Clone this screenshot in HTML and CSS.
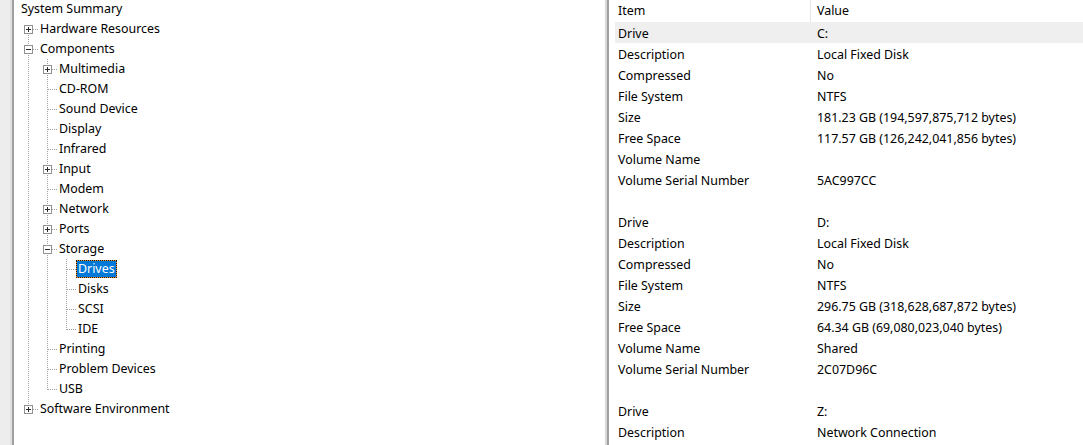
FILE: index.html
```html
<!DOCTYPE html>
<html lang="en">
<head>
    <meta charset="UTF-8">
    <meta name="viewport" content="width=device-width, initial-scale=1.0">
    <title>System Information</title>
    <link rel="stylesheet" href="styles.css">
</head>
<body>
    <div class="window">
        <div class="edge"></div>

        <div class="tree-pane">
            <div class="tree">
                <div class="node"><span class="label">System Summary</span></div>
                <div class="node"><span class="cell first"><span class="box plus"></span></span><span class="label">Hardware Resources</span></div>
                <div class="node"><span class="cell tee"><span class="box minus"></span></span><span class="label">Components</span></div>

                <div class="node"><span class="cell pipe"></span><span class="cell tee"><span class="box plus"></span></span><span class="label">Multimedia</span></div>
                <div class="node"><span class="cell pipe"></span><span class="cell tee"></span><span class="label">CD-ROM</span></div>
                <div class="node"><span class="cell pipe"></span><span class="cell tee"></span><span class="label">Sound Device</span></div>
                <div class="node"><span class="cell pipe"></span><span class="cell tee"></span><span class="label">Display</span></div>
                <div class="node"><span class="cell pipe"></span><span class="cell tee"></span><span class="label">Infrared</span></div>
                <div class="node"><span class="cell pipe"></span><span class="cell tee"><span class="box plus"></span></span><span class="label">Input</span></div>
                <div class="node"><span class="cell pipe"></span><span class="cell tee"></span><span class="label">Modem</span></div>
                <div class="node"><span class="cell pipe"></span><span class="cell tee"><span class="box plus"></span></span><span class="label">Network</span></div>
                <div class="node"><span class="cell pipe"></span><span class="cell tee"><span class="box plus"></span></span><span class="label">Ports</span></div>
                <div class="node"><span class="cell pipe"></span><span class="cell tee"><span class="box minus"></span></span><span class="label">Storage</span></div>

                <div class="node"><span class="cell pipe"></span><span class="cell pipe"></span><span class="cell tee"></span><span class="label selected"><span>Drives</span></span></div>
                <div class="node"><span class="cell pipe"></span><span class="cell pipe"></span><span class="cell tee"></span><span class="label">Disks</span></div>
                <div class="node"><span class="cell pipe"></span><span class="cell pipe"></span><span class="cell tee"></span><span class="label">SCSI</span></div>
                <div class="node"><span class="cell pipe"></span><span class="cell pipe"></span><span class="cell elbow"></span><span class="label">IDE</span></div>

                <div class="node"><span class="cell pipe"></span><span class="cell tee"></span><span class="label">Printing</span></div>
                <div class="node"><span class="cell pipe"></span><span class="cell tee"></span><span class="label">Problem Devices</span></div>
                <div class="node"><span class="cell pipe"></span><span class="cell elbow"></span><span class="label">USB</span></div>

                <div class="node"><span class="cell elbow"><span class="box plus"></span></span><span class="label">Software Environment</span></div>
            </div>
        </div>

        <div class="splitter"></div>

        <div class="list-pane">
            <div class="row header">
                <div class="col-item">Item</div>
                <div class="col-value">Value</div>
            </div>

            <div class="row hot"><div class="col-item">Drive</div><div class="col-value">C:</div></div>
            <div class="row"><div class="col-item">Description</div><div class="col-value">Local Fixed Disk</div></div>
            <div class="row"><div class="col-item">Compressed</div><div class="col-value">No</div></div>
            <div class="row"><div class="col-item">File System</div><div class="col-value">NTFS</div></div>
            <div class="row"><div class="col-item">Size</div><div class="col-value">181.23 GB (194,597,875,712 bytes)</div></div>
            <div class="row"><div class="col-item">Free Space</div><div class="col-value">117.57 GB (126,242,041,856 bytes)</div></div>
            <div class="row"><div class="col-item">Volume Name</div><div class="col-value"></div></div>
            <div class="row"><div class="col-item">Volume Serial Number</div><div class="col-value">5AC997CC</div></div>
            <div class="row"><div class="col-item"></div><div class="col-value"></div></div>

            <div class="row"><div class="col-item">Drive</div><div class="col-value">D:</div></div>
            <div class="row"><div class="col-item">Description</div><div class="col-value">Local Fixed Disk</div></div>
            <div class="row"><div class="col-item">Compressed</div><div class="col-value">No</div></div>
            <div class="row"><div class="col-item">File System</div><div class="col-value">NTFS</div></div>
            <div class="row"><div class="col-item">Size</div><div class="col-value">296.75 GB (318,628,687,872 bytes)</div></div>
            <div class="row"><div class="col-item">Free Space</div><div class="col-value">64.34 GB (69,080,023,040 bytes)</div></div>
            <div class="row"><div class="col-item">Volume Name</div><div class="col-value">Shared</div></div>
            <div class="row"><div class="col-item">Volume Serial Number</div><div class="col-value">2C07D96C</div></div>
            <div class="row"><div class="col-item"></div><div class="col-value"></div></div>

            <div class="row"><div class="col-item">Drive</div><div class="col-value">Z:</div></div>
            <div class="row"><div class="col-item">Description</div><div class="col-value">Network Connection</div></div>
        </div>
    </div>
</body>
</html>
```

FILE: styles.css
```css
body {
    margin: 0;
    padding: 0;
    font-family: "Noto Sans", "Open Sans", sans-serif;
    font-size: 12.4px;
    color: #000;
    background-color: #fff;
}

.window {
    display: flex;
    height: 445px;
    overflow: hidden;
}

/* strip of the window frame on the left */
.edge {
    flex: 0 0 10px;
    background-color: #ededed;
    border-right: 2px solid #e0e0e0;
}

.tree-pane {
    flex: 0 0 593px;
    border-left: 2px solid #a0a0a0;
    box-sizing: border-box;
    padding-left: 5px;
    background-color: #fff;
    overflow: hidden;
}

.tree {
    margin-top: -1px;
}

.node {
    display: flex;
    align-items: center;
    height: 20px;
    white-space: nowrap;
}

/* one indent column of the tree, lines drawn as 1px dots */
.cell {
    flex: 0 0 19px;
    height: 20px;
    display: flex;
    align-items: center;
}

.pipe {
    background: repeating-linear-gradient(to bottom, #a0a0a0 0 1px, transparent 1px 2px) 9px 0 / 1px 20px no-repeat;
}

.tee {
    background:
        repeating-linear-gradient(to right, #a0a0a0 0 1px, transparent 1px 2px) 10px 10px / 9px 1px no-repeat,
        repeating-linear-gradient(to bottom, #a0a0a0 0 1px, transparent 1px 2px) 9px 0 / 1px 20px no-repeat;
}

.elbow {
    background:
        repeating-linear-gradient(to right, #a0a0a0 0 1px, transparent 1px 2px) 10px 10px / 9px 1px no-repeat,
        repeating-linear-gradient(to bottom, #a0a0a0 0 1px, transparent 1px 2px) 9px 0 / 1px 11px no-repeat;
}

.first {
    background:
        repeating-linear-gradient(to right, #a0a0a0 0 1px, transparent 1px 2px) 10px 10px / 9px 1px no-repeat,
        repeating-linear-gradient(to bottom, #a0a0a0 0 1px, transparent 1px 2px) 9px 10px / 1px 10px no-repeat;
}

/* expand / collapse box */
.box {
    width: 9px;
    height: 9px;
    margin-left: 5px;
    margin-top: 1px;
    box-sizing: border-box;
    border: 1px solid #919191;
    background-color: #fff;
}

.minus {
    background: linear-gradient(#2a2a2a, #2a2a2a) 1px 3px / 5px 1px no-repeat, #fff;
}

.plus {
    background:
        linear-gradient(#2a2a2a, #2a2a2a) 1px 3px / 5px 1px no-repeat,
        linear-gradient(#2a2a2a, #2a2a2a) 3px 1px / 1px 5px no-repeat,
        #fff;
}

.label {
    padding: 0 2px;
    line-height: 18px;
}

/* focus rectangle around the selected item */
.label.selected {
    padding: 0;
    line-height: 16px;
    border: 1px dotted #1a1a1a;
    background-color: #f0912e;
}

.label.selected span {
    display: block;
    padding: 0 1px;
    background-color: #0078d7;
    color: #fff;
}

.splitter {
    flex: 0 0 2px;
    background-color: #d8d8d8;
    border-right: 2px solid #a0a0a0;
}

.list-pane {
    flex: 1;
    padding-left: 6px;
    overflow: hidden;
}

.row {
    display: grid;
    grid-template-columns: 196px 1fr;
    box-sizing: border-box;
    height: 21px;
    padding-top: 2px;
    line-height: 19px;
    white-space: nowrap;
}

.row.header {
    height: 22px;
    line-height: 18px;
}

.row.header .col-item {
    margin-top: -2px;
    padding-top: 2px;
    border-right: 1px solid #e5e5e5;
}

.row.hot {
    background-color: #efefef;
}

.col-item {
    padding-left: 3px;
}

.col-value {
    padding-left: 6px;
}
```
